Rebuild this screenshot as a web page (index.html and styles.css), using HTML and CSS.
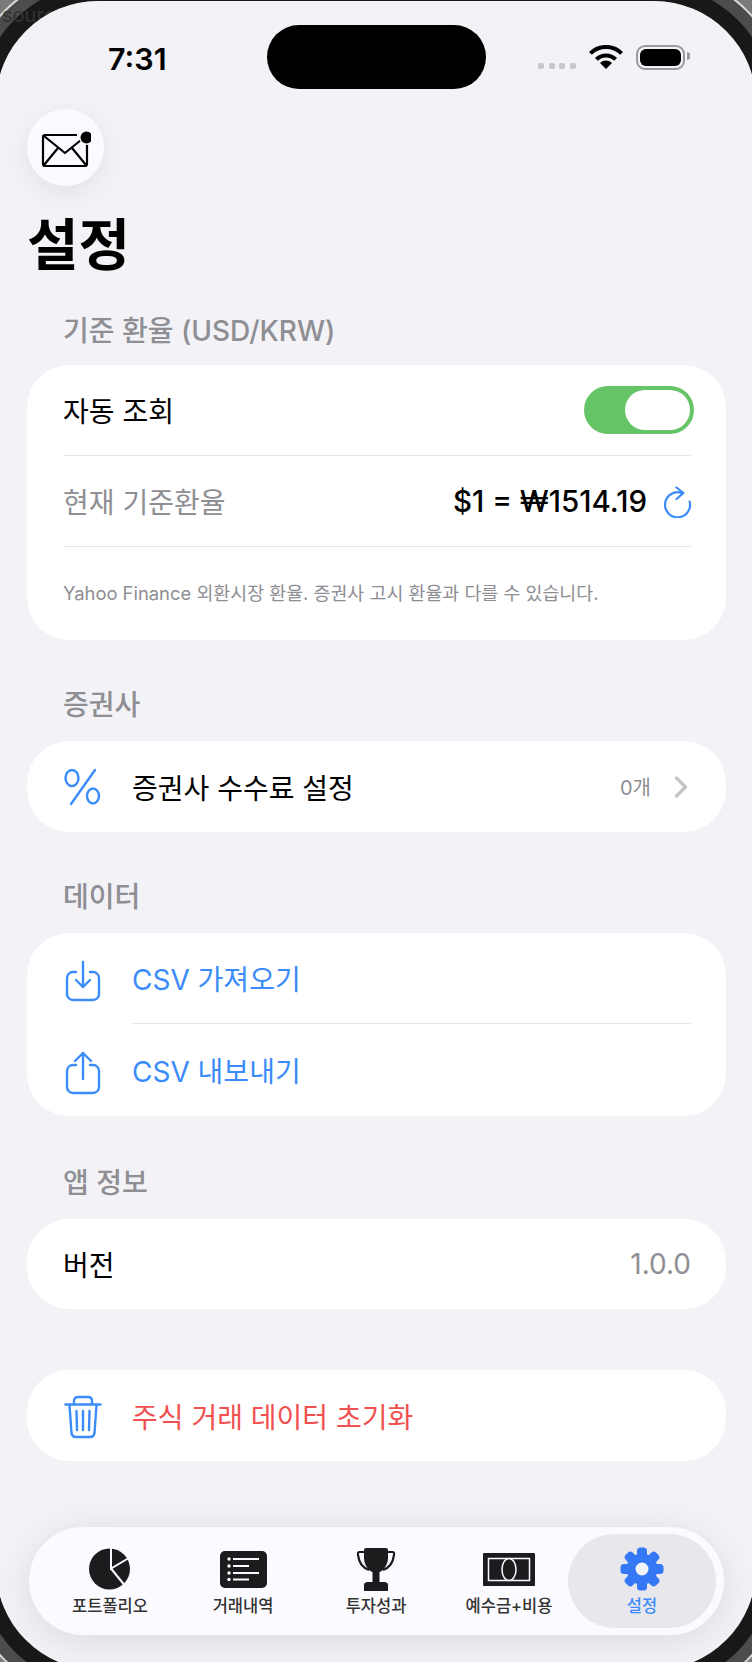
FILE: index.html
```html
<!DOCTYPE html>
<html lang="ko">
<head>
  <meta charset="UTF-8">
  <title>설정</title>
  <link rel="stylesheet" href="styles.css">
</head>
<body>
  <div class="bezel"></div>
  <span class="stray">source</span>

  <div class="screen">
    <div class="status-bar">
      <div class="time">7:31</div>
      <div class="island"></div>
      <div class="status-icons">
        <div class="signal"><i></i><i></i><i></i><i></i></div>
        <svg class="wifi" width="34" height="24" viewBox="0 0 34 24">
          <path d="M1.4 8.4A22 22 0 0 1 32.6 8.4" fill="none" stroke="#000" stroke-width="4"/>
          <path d="M7.4 14.4A13.5 13.5 0 0 1 26.6 14.4" fill="none" stroke="#000" stroke-width="4"/>
          <path d="M17 24L11 18A8.500 8.500 0 0 1 23 18Z" fill="#000"/>
        </svg>
        <div class="battery"><div class="battery-level"></div></div>
      </div>
    </div>

    <div class="mail-btn">
      <svg width="52" height="40" viewBox="0 0 52 40" fill="none" stroke="#000" stroke-width="2.2" stroke-linejoin="round">
        <path d="M38 7H6Q4 7 4 9V36Q4 38 6 38H46Q48 38 48 36V16"/>
        <path d="M5 8L26 25L42 12"/>
        <path d="M5 37L19 20M47 37L33 20"/>
        <circle cx="47.500" cy="9.500" r="7.500" fill="#fafaff" stroke="none"/>
        <circle cx="47.500" cy="9.500" r="6" fill="#000" stroke="none"/>
      </svg>
    </div>

    <h1 class="title">설정</h1>

    <div class="section-label first">기준 환율 (USD/KRW)</div>
    <div class="card">
      <div class="row">
        <div class="row-body line">
          <span>자동 조회</span>
          <div class="toggle"><div class="knob"></div></div>
        </div>
      </div>
      <div class="row">
        <div class="row-body line">
          <span class="muted">현재 기준환율</span>
          <div class="rate">
            <span class="rate-value">$1 = ₩1514.19</span>
            <svg width="28" height="32" viewBox="0 0 28 32" fill="none" stroke="#3b8cfa" stroke-width="2.200" stroke-linecap="round" stroke-linejoin="round">
              <path d="M25.600 15.500A12.500 12.500 0 1 1 18 7.100"/>
              <path d="M12.500 1.500L19.500 7L12.500 13"/>
            </svg>
          </div>
        </div>
      </div>
      <div class="note">Yahoo Finance 외환시장 환율. 증권사 고시 환율과 다를 수 있습니다.</div>
    </div>

    <div class="section-label">증권사</div>
    <div class="card">
      <div class="row">
        <div class="row-icon">
          <svg width="38" height="38" viewBox="0 0 38 38" fill="none" stroke="#3b8cfa" stroke-width="2.400" stroke-linecap="round">
            <ellipse cx="9" cy="10" rx="6.500" ry="8"/>
            <ellipse cx="30" cy="28" rx="6" ry="7.500"/>
            <path d="M32 2L8 36"/>
          </svg>
        </div>
        <div class="row-body">
          <span>증권사 수수료 설정</span>
          <div class="row-right">
            <span class="count">0개</span>
            <svg width="14" height="22" viewBox="0 0 14 22" fill="none" stroke="#c4c4c7" stroke-width="3.200" stroke-linecap="round" stroke-linejoin="round">
              <path d="M2.500 2L11.500 11L2.500 20"/>
            </svg>
          </div>
        </div>
      </div>
    </div>

    <div class="section-label">데이터</div>
    <div class="card pad">
      <div class="row">
        <div class="row-icon">
          <svg class="icon-import" width="36" height="42" viewBox="0 0 36 42" fill="none" stroke="#3b8cfa" stroke-width="2.400" stroke-linecap="round" stroke-linejoin="round">
            <path d="M11 12H8A6 6 0 0 0 2 18V34A6 6 0 0 0 8 40H28A6 6 0 0 0 34 34V18A6 6 0 0 0 28 12H25"/>
            <path d="M18 2V27M11 20L18 27L25 20"/>
          </svg>
        </div>
        <div class="row-body line blue"><span>CSV 가져오기</span></div>
      </div>
      <div class="row">
        <div class="row-icon">
          <svg class="icon-export" width="36" height="44" viewBox="0 0 36 44" fill="none" stroke="#3b8cfa" stroke-width="2.400" stroke-linecap="round" stroke-linejoin="round">
            <path d="M11 14H8A6 6 0 0 0 2 20V36A6 6 0 0 0 8 42H28A6 6 0 0 0 34 36V20A6 6 0 0 0 28 14H25"/>
            <path d="M18 28V2M10 10L18 2L26 10"/>
          </svg>
        </div>
        <div class="row-body blue"><span>CSV 내보내기</span></div>
      </div>
    </div>

    <div class="section-label app">앱 정보</div>
    <div class="card">
      <div class="row">
        <div class="row-body short">
          <span>버전</span>
          <span class="muted">1.0.0</span>
        </div>
      </div>
    </div>

    <div class="card danger-card">
      <div class="row">
        <div class="row-icon">
          <svg class="icon-trash" width="38" height="44" viewBox="0 0 38 44" fill="none" stroke="#3b8cfa" stroke-width="2.400" stroke-linecap="round" stroke-linejoin="round">
            <path d="M1.500 9.500H36.500"/>
            <path d="M10 9V6Q10 2 14 2H24Q28 2 28 6V9"/>
            <path d="M5.500 10L7.500 38Q8 42 12 42H26Q30 42 30.500 38L32.500 10"/>
            <path d="M12.500 16L13 35M19 16V35M25.500 16L25 35"/>
          </svg>
        </div>
        <div class="row-body red"><span>주식 거래 데이터 초기화</span></div>
      </div>
    </div>

    <div class="tab-bar">
      <div class="tab">
        <div class="tab-icon">
          <svg width="46" height="46" viewBox="0 0 46 46">
            <circle cx="22.500" cy="23" r="20.500" fill="#1c1c1e"/>
            <path d="M24 1V22.500L41 12.500M24 22.500L37 38.500" fill="none" stroke="#fbfbff" stroke-width="2"/>
          </svg>
        </div>
        <div class="tab-label">포트폴리오</div>
      </div>
      <div class="tab">
        <div class="tab-icon">
          <svg width="47" height="37" viewBox="0 0 47 37">
            <rect width="47" height="37" rx="5" fill="#1c1c1e"/>
            <path d="M13 8H39M13 15H29M13 22H39M13 28.500H29" stroke="#fbfbff" stroke-width="1.800"/>
            <g fill="#fbfbff">
              <circle cx="9" cy="8" r="1.700"/>
              <circle cx="9" cy="15" r="1.700"/>
              <circle cx="9" cy="22" r="1.700"/>
              <circle cx="9" cy="28.500" r="1.700"/>
            </g>
          </svg>
        </div>
        <div class="tab-label">거래내역</div>
      </div>
      <div class="tab">
        <div class="tab-icon">
          <svg width="40" height="44" viewBox="0 0 40 44">
            <path d="M8 3Q8 1 10 1H30Q32 1 32 3V11C32 18 27 24 23.500 25V35H28Q32 35 32 38V44H8V38Q8 35 12 35H16.500V25C13 24 8 18 8 11Z" fill="#1c1c1e"/>
            <path d="M9 5H3.500Q1.500 5 2 8C3 16 7 21 13 23M31 5H36.500Q38.500 5 38 8C37 16 33 21 27 23" fill="none" stroke="#1c1c1e" stroke-width="2.200"/>
          </svg>
        </div>
        <div class="tab-label">투자성과</div>
      </div>
      <div class="tab">
        <div class="tab-icon">
          <svg width="52" height="33" viewBox="0 0 52 33">
            <rect width="52" height="33" rx="1" fill="#1c1c1e"/>
            <rect x="5.500" y="5.500" width="41" height="22" fill="none" stroke="#fbfbff" stroke-width="1.500"/>
            <ellipse cx="26" cy="16.500" rx="7" ry="11" fill="#1c1c1e" stroke="#fbfbff" stroke-width="1.500"/>
          </svg>
        </div>
        <div class="tab-label">예수금+비용</div>
      </div>
      <div class="tab active">
        <div class="tab-icon">
          <svg width="44" height="44" viewBox="-22 -22 44 44">
            <g fill="#3478f6">
              <circle r="15.500"/>
              <rect x="-5" y="-21.500" width="10" height="10" rx="3.500"/>
              <rect x="-5" y="-21.500" width="10" height="10" rx="3.500" transform="rotate(45)"/>
              <rect x="-5" y="-21.500" width="10" height="10" rx="3.500" transform="rotate(90)"/>
              <rect x="-5" y="-21.500" width="10" height="10" rx="3.500" transform="rotate(135)"/>
              <rect x="-5" y="-21.500" width="10" height="10" rx="3.500" transform="rotate(180)"/>
              <rect x="-5" y="-21.500" width="10" height="10" rx="3.500" transform="rotate(225)"/>
              <rect x="-5" y="-21.500" width="10" height="10" rx="3.500" transform="rotate(270)"/>
              <rect x="-5" y="-21.500" width="10" height="10" rx="3.500" transform="rotate(315)"/>
            </g>
            <circle r="6.500" fill="#f2f2f7"/>
          </svg>
        </div>
        <div class="tab-label">설정</div>
      </div>
    </div>
  </div>
</body>
</html>
```

FILE: styles.css
```css
html, body {
  margin: 0;
  width: 752px;
  height: 1662px;
  overflow: hidden;
}

body {
  position: relative;
  background: #7a7a7a;
  font-family: Inter, "Noto Sans CJK KR", sans-serif;
  color: #000;
}

/* phone edge, only the corners show */
.bezel {
  position: absolute;
  left: -4px;
  top: 1px;
  width: 760px;
  height: 1669px;
  border-radius: 102px;
  box-shadow: 0 0 0 16px #181818, 0 0 0 28px #4c4c4c, 0 0 0 30px #d8d8d8;
}

.stray {
  position: absolute;
  left: 2px;
  top: 3px;
  font-size: 20px;
  line-height: 24px;
  color: #333;
}

.screen {
  position: relative;
  box-sizing: border-box;
  width: 760px;
  height: 1669px;
  margin: 1px -4px 0;
  padding: 0 30px 0 31px;
  background: #f2f2f7;
  border-radius: 102px;
  overflow: hidden;
}

.status-bar {
  height: 64px;
  padding-top: 24px;
  display: flex;
  align-items: center;
  position: relative;
}

.time {
  position: absolute;
  left: 81px;
  top: 40px;
  font-size: 30.500px;
  line-height: 36px;
  font-weight: 600;
}

.island {
  position: absolute;
  left: 240px;
  top: 24px;
  width: 219px;
  height: 64px;
  background: #000;
  border-radius: 32px;
}

.status-icons {
  position: absolute;
  left: 511px;
  top: 44px;
  display: flex;
  align-items: flex-start;
}

.signal {
  display: flex;
  gap: 4.500px;
  margin-top: 18px;
  margin-right: 13px;
}

.signal i {
  width: 6px;
  height: 6px;
  border-radius: 2px;
  background: #c7c7cc;
}

.wifi {
  display: block;
}

.battery {
  position: relative;
  box-sizing: border-box;
  width: 49px;
  height: 25px;
  margin-left: 13px;
  padding: 2px;
  border: 2px solid #9a9a9e;
  border-radius: 9px;
}

.battery::after {
  content: "";
  position: absolute;
  right: -7px;
  top: 5px;
  width: 3px;
  height: 8px;
  background: #9a9a9e;
  border-radius: 0 3px 3px 0;
}

.battery-level {
  height: 100%;
  background: #000;
  border-radius: 6px;
}

.mail-btn {
  width: 77px;
  height: 77px;
  margin-top: 20px;
  border-radius: 50%;
  background: #fafaff;
  box-shadow: 0 8px 30px rgba(0, 0, 0, 0.07);
  display: flex;
  align-items: center;
  justify-content: center;
}

.mail-btn svg {
  margin-top: 1px;
  margin-left: -2px;
}

.title {
  margin: 26px 0 0;
  height: 66px;
  font-size: 56px;
  line-height: 66px;
  font-weight: 700;
}

.section-label {
  height: 34px;
  line-height: 34px;
  margin: 48px 0 19px 36px;
  font-size: 28px;
  font-weight: 500;
  color: #8e8e93;
}

.section-label.first {
  margin-top: 36px;
  margin-bottom: 17px;
}

.section-label.app {
  margin-top: 50px;
}

.card {
  background: #fff;
  border-radius: 42px;
}

.card.pad {
  padding-bottom: 1px;
}

.danger-card {
  margin-top: 61px;
}

.row {
  display: flex;
  align-items: stretch;
  padding: 0 35px 0 36px;
  font-size: 28px;
}

.row-icon {
  width: 69px;
  flex: none;
  display: flex;
  align-items: center;
}

.icon-import {
  margin: 4px 0 0 2px;
}

.icon-export {
  margin: 6px 0 0 2px;
}

.icon-trash {
  margin: 2px 0 0 1px;
}

.row-body {
  flex: 1;
  height: 91px;
  box-sizing: border-box;
  display: flex;
  align-items: center;
  justify-content: space-between;
}

.row-body.short {
  height: 90px;
}

.row-body.line {
  border-bottom: 1.500px solid #e5e5ea;
}

.blue {
  color: #3b8cfa;
}

.red {
  color: #f0504f;
}

.muted {
  color: #8e8e93;
}

.toggle {
  box-sizing: border-box;
  width: 110px;
  height: 48px;
  padding: 4px;
  margin-right: -3px;
  background: #65c466;
  border-radius: 24px;
  display: flex;
  justify-content: flex-end;
}

.knob {
  width: 65px;
  height: 40px;
  background: #fff;
  border-radius: 20px;
}

.rate {
  display: flex;
  align-items: center;
  gap: 17px;
}

.rate-value {
  font-weight: 500;
  font-size: 29.500px;
}

.rate svg {
  margin-right: -1px;
  margin-top: 2px;
}

.note {
  height: 93px;
  padding-left: 36px;
  font-size: 18.400px;
  line-height: 92px;
  color: #8e8e93;
}

.row-right {
  display: flex;
  align-items: center;
  gap: 23px;
}

.row-right svg {
  margin-right: 3px;
}

.count {
  font-size: 20px;
  color: #8e8e93;
}

.tab-bar {
  box-sizing: border-box;
  height: 108px;
  margin: 66px 2px 0;
  padding: 7px 14px 7px 14.500px;
  background: #fbfbff;
  border-radius: 54px;
  box-shadow: 0 6px 40px rgba(0, 0, 0, 0.1);
  display: flex;
}

.tab {
  width: 133px;
  flex: none;
  display: flex;
  flex-direction: column;
  align-items: center;
  padding-top: 12px;
  box-sizing: border-box;
  font-size: 16.500px;
  font-weight: 500;
  color: #333;
}

.tab-icon {
  height: 46px;
  display: flex;
  align-items: center;
  justify-content: center;
}

.tab-label {
  height: 24px;
  line-height: 24px;
  margin-top: 2px;
}

.tab.active {
  width: 148px;
  margin: 0 -7.500px;
  background: #e8e8ec;
  border-radius: 47px;
  color: #3b8cfa;
}
```
